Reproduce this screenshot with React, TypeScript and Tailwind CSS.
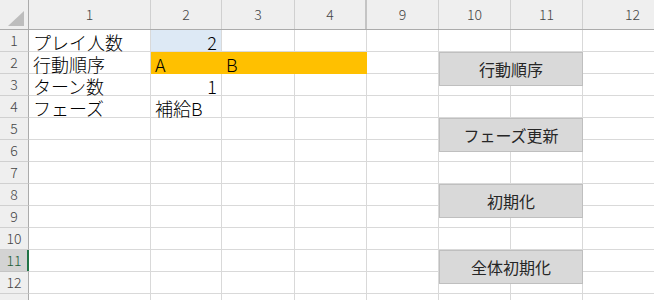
import type { ReactNode } from 'react';

const cols = [
  { label: '1', w: 'w-[122px]' },
  { label: '2', w: 'w-[71px]' },
  { label: '3', w: 'w-[73px]' },
  { label: '4', w: 'w-[72px]' },
  { label: '9', w: 'w-[72px]' },
  { label: '10', w: 'w-[72px]' },
  { label: '11', w: 'w-[72px]' },
  { label: '12', w: 'w-[100px]' },
];

type Cell = { text?: string; right?: boolean; bg?: string };

const data: Record<number, Record<number, Cell>> = {
  1: { 0: { text: 'プレイ人数' }, 1: { text: '2', right: true, bg: 'bg-[#dde9f5]' } },
  2: {
    0: { text: '行動順序' },
    1: { text: 'A', bg: 'bg-[#ffc000]' },
    2: { text: 'B', bg: 'bg-[#ffc000]' },
    3: { bg: 'bg-[#ffc000]' },
  },
  3: { 0: { text: 'ターン数' }, 1: { text: '1', right: true } },
  4: { 0: { text: 'フェーズ' }, 1: { text: '補給B' } },
};

const buttons = [
  { label: '行動順序', top: 'top-[52px]' },
  { label: 'フェーズ更新', top: 'top-[118px]' },
  { label: '初期化', top: 'top-[184px]' },
  { label: '全体初期化', top: 'top-[250px]' },
];

function HeaderCell({ children, className }: { children?: ReactNode; className: string }) {
  return (
    <div className={`h-full flex items-center justify-center border-r border-[#d0d0d0] text-[14px] font-light text-[#444] ${className}`}>
      {children}
    </div>
  );
}

export default function App() {
  const rows = Array.from({ length: 13 }, (_, i) => i + 1);

  return (
    <div
      className="relative w-[654px] h-[300px] overflow-hidden bg-white"
      style={{ fontFamily: '"Noto Sans CJK JP", "Noto Sans", sans-serif' }}
    >
      {/* column headers */}
      <div className="flex h-[30px] bg-[#efefef] border-b border-[#ababab]">
        <div className="w-[29px] h-full shrink-0 border-r border-[#ababab] flex items-end justify-end pr-[3px] pb-[2px]">
          <svg width="18" height="17" viewBox="0 0 18 17">
            <polygon points="1,16 17,1 17,16" fill="#bdbdbd" />
          </svg>
        </div>
        {cols.map((c, i) => (
          <HeaderCell key={c.label} className={`${c.w} shrink-0 ${i === 3 ? 'border-r-2 border-r-[#c4c4c4]' : ''}`}>
            {c.label}
          </HeaderCell>
        ))}
      </div>

      {rows.map((r) => (
        <div key={r} className="flex h-[22px]">
          <div
            className={`relative w-[29px] shrink-0 h-full flex items-center justify-center border-r border-b text-[14px] font-light ${
              r === 11
                ? 'bg-[#d3d3d3] text-[#1e5e38] border-b-[#c4c4c4] border-r-[#ababab]'
                : 'bg-[#efefef] text-[#444] border-[#d0d0d0] border-r-[#ababab]'
            }`}
          >
            {r}
            {r === 11 && <div className="absolute right-[-1px] top-0 h-full w-[2px] bg-[#217346]" />}
          </div>
          {cols.map((c, ci) => {
            const cell = data[r]?.[ci];
            const filled = cell?.bg === 'bg-[#ffc000]';
            return (
              <div
                key={c.label}
                className={`${c.w} shrink-0 h-full overflow-visible whitespace-nowrap text-[18px] leading-[18px] font-light text-black flex items-end ${
                  cell?.right ? 'justify-end pr-[4px]' : 'pl-[4px]'
                } ${cell?.bg ?? ''} ${
                  filled ? 'border-b border-[#ffc000]' : 'border-r border-b border-[#d9d9d9]'
                } ${ci === 3 && filled ? 'border-r border-r-[#ffc000]' : ''}`}
              >
                {cell?.text && <span>{cell.text}</span>}
              </div>
            );
          })}
        </div>
      ))}

      {buttons.map((b) => (
        <button
          key={b.label}
          className={`absolute left-[439px] ${b.top} w-[144px] h-[34px] bg-[#d9d9d9] border border-[#bfbfbf] text-[16px] text-[#262626] flex items-center justify-center`}
        >
          {b.label}
        </button>
      ))}
    </div>
  );
}
